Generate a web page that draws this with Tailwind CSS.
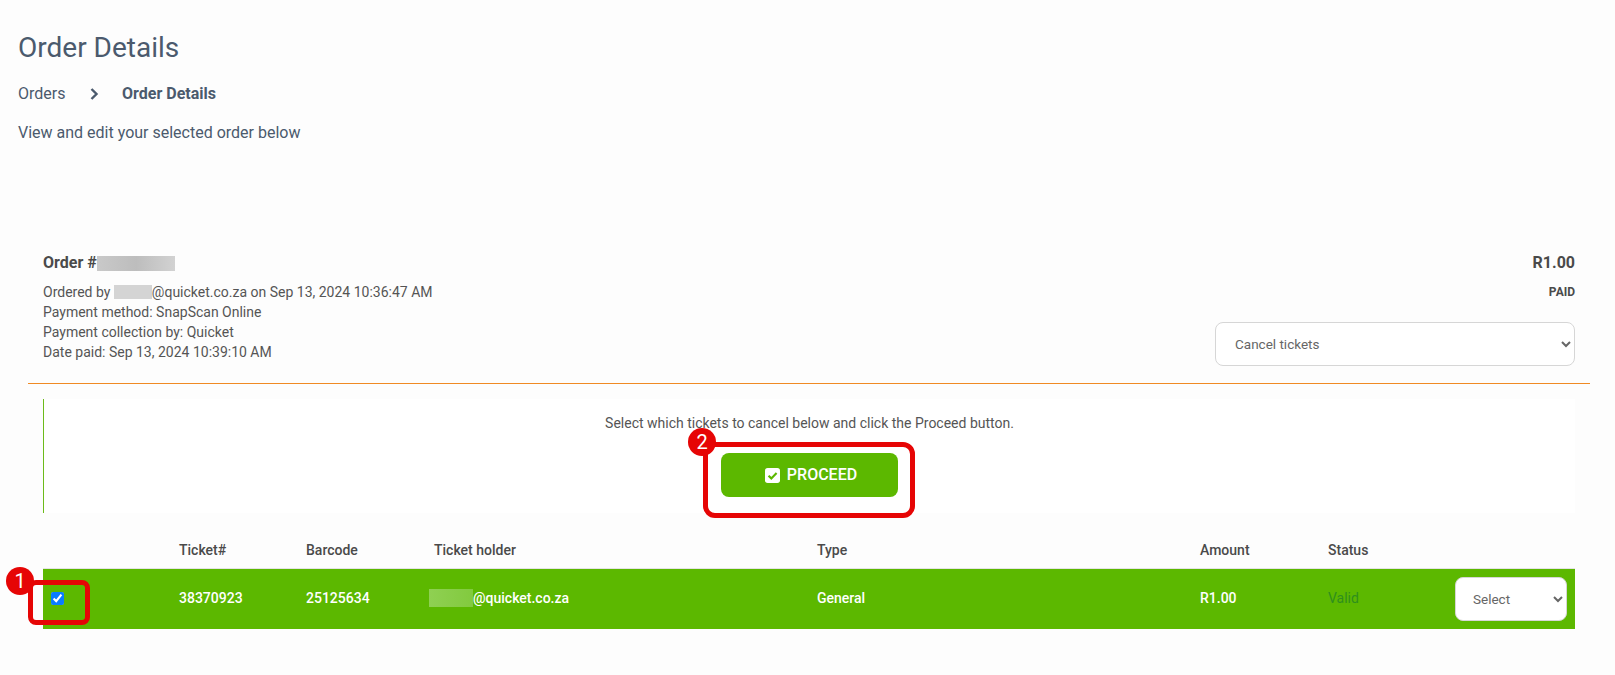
<!doctype html>
<html><head><meta charset="utf-8"><script src="https://cdn.jsdelivr.net/npm/@tailwindcss/browser@4"></script></head>
<body class="bg-[#fdfdfd] font-['Roboto',sans-serif] text-[#4a4a4a] overflow-hidden">
<div class="relative w-[1615px] h-[675px] overflow-hidden">
  <header class="px-[18px] pt-[30px] h-[247px] text-[#4b5a6d]">
    <h1 class="text-[28px] leading-[36px]">Order Details</h1>
    <nav class="flex items-center mt-[18px] text-[16px] leading-[20px]">
      <span class="w-[71px]">Orders</span>
      <svg class="w-[12px] h-[14px] mr-[21px]" viewBox="0 0 12 14" fill="none"><path d="M2.5 2l5 5-5 5" stroke="#4b5a6d" stroke-width="2.4"/></svg>
      <b class="font-bold">Order Details</b>
    </nav>
    <p class="mt-[19px] text-[16px] leading-[20px]">View and edit your selected order below</p>
  </header>
  <section class="px-[43px] pr-[40px] flex justify-between h-[136px]">
    <div>
      <h2 class="flex items-center text-[16px] font-bold leading-[20px] mt-[6px]">Order #<span class="block w-[78px] h-[15px] bg-gradient-to-r from-[#c9c9c9] via-[#bdbdbd] to-[#d2d2d2]"></span></h2>
      <div class="mt-[9px] text-[14px] leading-[20px] text-[#555]">
        <p class="flex items-center">Ordered by&nbsp;<span class="block w-[38px] h-[14px] bg-[#d4d4d4]"></span>@quicket.co.za on Sep 13, 2024 10:36:47 AM</p>
        <p>Payment method: SnapScan Online</p>
        <p>Payment collection by: Quicket</p>
        <p>Date paid: Sep 13, 2024 10:39:10 AM</p>
      </div>
    </div>
    <div class="flex flex-col items-end">
      <p class="text-[16px] font-bold leading-[20px] mt-[6px]">R1.00</p>
      <p class="text-[12px] font-bold leading-[14px] mt-[12px]">PAID</p>
      <select class="mt-[23px] w-[360px] h-[44px] pl-[15px] pr-[4px] bg-white border border-[#d6d6d6] rounded-[8px] text-[13.5px] text-[#666]"><option>Cancel tickets</option></select>
    </div>
  </section>
  <div class="ml-[28px] w-[1562px] h-px bg-[#f08a24]"></div>
  <section class="mt-[15px] ml-[43px] w-[1532px] h-[114px] bg-white border-l border-[#6dbb1a] pt-[15px] flex flex-col items-center">
    <p class="text-[14px] leading-[18px] text-[#555]">Select which tickets to cancel below and click the Proceed button.</p>
    <button class="mt-[21px] w-[177px] h-[44px] bg-[#5cb800] rounded-[8px] flex items-center justify-center gap-[7px] text-white font-medium text-[16px] pl-[3px]">
      <svg class="w-[15px] h-[15px]" viewBox="0 0 14 14"><rect x="0" y="0" width="14" height="14" rx="2.5" fill="#fff"/><path d="M3.3 7.2l2.6 2.5 4.9-5" stroke="#5cb800" stroke-width="2" fill="none"/></svg>
      PROCEED
    </button>
  </section>
  <div class="ml-[43px] w-[1532px] mt-[23px] grid grid-cols-[136px_127px_128px_383px_383px_128px_127px_120px] items-center h-[33px] border-b border-[#e4e4e4] text-[14px] font-medium leading-[18px] pb-[4px]">
    <span></span><span>Ticket#</span><span>Barcode</span><span>Ticket holder</span><span>Type</span><span>Amount</span><span>Status</span><span></span>
  </div>
  <div class="ml-[43px] w-[1532px] h-[60px] bg-[#5cb800] grid grid-cols-[136px_127px_128px_383px_383px_128px_127px_120px] items-center text-[14px] font-medium text-white">
    <span class="pl-[8px] flex pb-[2px]"><input type="checkbox" checked class="w-[13px] h-[13px] m-0 accent-[#0a7cff]"></span>
    <span class="pb-[2px]">38370923</span><span class="pb-[2px]">25125634</span>
    <span class="flex items-center -ml-[5px] pb-[2px]"><span class="block w-[44px] h-[18px] bg-gradient-to-r from-[#8fd052] to-[#82ca3e]"></span>@quicket.co.za</span>
    <span class="pb-[2px]">General</span><span class="pb-[2px]">R1.00</span><span class="font-normal text-[#2f8f1d] pb-[2px]">Valid</span>
    <span><select class="w-[112px] h-[44px] pl-[13px] pr-[2px] bg-white border border-[#d6d6d6] rounded-[8px] text-[13.5px] font-normal text-[#666]"><option>Select</option></select></span>
  </div>

  <div class="absolute left-[703px] top-[442px] w-[212px] h-[76px] border-[5px] border-[#e60505] rounded-[12px]"></div>
  <div class="absolute left-[688px] top-[428px] w-[28px] h-[28px] rounded-full bg-[#e60505] text-white text-[20px] leading-[28px] text-center">2</div>
  <div class="absolute left-[28px] top-[580px] w-[62px] h-[45px] border-[5px] border-[#e60505] rounded-[8px]"></div>
  <div class="absolute left-[6px] top-[567px] w-[28px] h-[28px] rounded-full bg-[#e60505] text-white text-[20px] leading-[28px] text-center">1</div>
</div>
</body></html>
